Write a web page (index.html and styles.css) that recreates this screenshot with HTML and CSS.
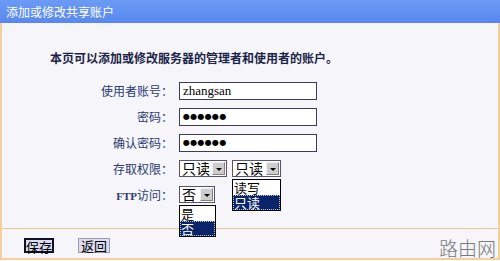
FILE: index.html
```html
<!DOCTYPE html>
<html lang="zh-CN">
<head>
<meta charset="utf-8">
<title>添加或修改共享账户</title>
<link rel="stylesheet" href="styles.css">
</head>
<body>
<div class="window">
  <div class="titlebar">添加或修改共享账户</div>
  <div class="content">
    <p class="intro">本页可以添加或修改服务器的管理者和使用者的账户。</p>
    <div class="form">
      <label class="lbl">使用者账号：</label>
      <div class="field"><div class="txt user">zhangsan</div></div>

      <label class="lbl">密码：</label>
      <div class="field"><div class="txt pw">●●●●●●</div></div>

      <label class="lbl">确认密码：</label>
      <div class="field"><div class="txt pw">●●●●●●</div></div>

      <label class="lbl">存取权限：</label>
      <div class="field selects">
        <div class="sel w48"><span class="val">只读</span><span class="arrow"></span></div>
        <div class="sel w49"><span class="val">只读</span><span class="arrow"></span>
          <ul class="dropdown dd49"><li>读写</li><li class="on">只读</li></ul>
        </div>
      </div>

      <label class="lbl"><span class="lat">FTP</span>访问：</label>
      <div class="field">
        <div class="sel w36"><span class="val">否</span><span class="arrow"></span>
          <ul class="dropdown dd37"><li>是</li><li class="on">否</li></ul>
        </div>
      </div>
    </div>
    <div class="sep"></div>
    <div class="footer">
      <div class="btns">
        <button class="btn default" type="button">保存</button>
        <button class="btn" type="button">返回</button>
      </div>
      <div class="mark">路由网</div>
    </div>
  </div>
</div>
</body>
</html>
```

FILE: styles.css
```css
* { box-sizing: border-box; }
body {
  margin: 0;
  width: 500px;
  height: 261px;
  overflow: hidden;
  background: #ffffff;
  font-family: "Noto Sans CJK SC", "Liberation Sans", sans-serif;
}
.window {
  height: 259px;
  display: flex;
  flex-direction: column;
}
.titlebar {
  height: 23px;
  line-height: 23px;
  padding-left: 6px;
  color: #ffffff;
  font-size: 12px;
  background: linear-gradient(#6b9bf5, #5887ef);
}
.content {
  flex: 1;
  display: flex;
  flex-direction: column;
  border: 2px solid #f2cf9c;
  border-top: 0;
  background: #f5f5fa;
}
.intro {
  margin: 27px 0 0 48px;
  font-size: 12px;
  line-height: 16px;
  font-weight: bold;
  color: #1b2448;
}
.form {
  margin-top: 16px;
  display: grid;
  grid-template-columns: 171px auto;
  grid-auto-rows: 18px;
  column-gap: 6px;
  row-gap: 8px;
}
.lbl {
  text-align: right;
  font-size: 12px;
  line-height: 18px;
  color: #2a3a70;
  white-space: nowrap;
}
.lat {
  font-family: "Liberation Serif", serif;
  font-weight: bold;
  font-size: 11px;
}
.txt {
  width: 138px;
  height: 18px;
  border: 1px solid #3c3c5a;
  background: #ffffff;
  padding: 0 3px;
  line-height: 16px;
  color: #000;
}
.user {
  font-family: "Liberation Serif", serif;
  font-size: 13px;
}
.pw {
  font-family: "DejaVu Sans", sans-serif;
  font-size: 8px;
  letter-spacing: 0.3px;
}
.selects {
  display: flex;
  gap: 5px;
}
.sel {
  position: relative;
  height: 17px;
  display: flex;
  align-items: stretch;
  border: 1px solid #55556a;
  background: #ffffff;
  font-size: 14px;
  color: #000;
}
.w48 { width: 48px; }
.w49 { width: 49px; }
.w36 { width: 36px; }
.val {
  flex: 1;
  padding-left: 2px;
  line-height: 15px;
  white-space: nowrap;
}
.arrow {
  position: relative;
  flex: none;
  width: 13px;
  margin: 1px 1px 1px 0;
  background: #cdcdcd;
  border: 1px solid;
  border-color: #eeeeee #808080 #808080 #eeeeee;
}
.arrow::after {
  content: "";
  position: absolute;
  left: 3px;
  top: 5px;
  border-left: 3px solid transparent;
  border-right: 3px solid transparent;
  border-top: 3px solid #000;
}
.dropdown {
  position: absolute;
  left: -1px;
  top: 18px;
  margin: 0;
  padding: 0;
  list-style: none;
  border: 1px solid #000;
  background: #ffffff;
  z-index: 2;
}
.dd49 { width: 49px; }
.dd37 { width: 37px; }
.dropdown li {
  height: 15px;
  line-height: 15px;
  padding-left: 1px;
  font-size: 13px;
}
.dropdown li.on {
  background: #0a246a;
  color: #ffffff;
  outline: 1px dotted #c8c8c8;
  outline-offset: -1px;
}
.sep {
  margin-top: 24px;
  height: 1px;
  background: #f0c890;
}
.footer {
  flex: 1;
  display: flex;
  justify-content: space-between;
  align-items: flex-start;
  padding: 9px 2px 0 22px;
}
.btns {
  display: flex;
  gap: 24px;
}
.btn {
  height: 15px;
  padding: 0;
  margin: 0;
  font-family: "Noto Sans CJK SC", sans-serif;
  font-size: 13px;
  line-height: 13px;
  white-space: nowrap;
  color: #000;
  background: #dcdcf2;
  border: 1px solid #9a9ab0;
}
.btn.default {
  border: 2px solid #111122;
  width: 30px;
}
.btn:not(.default) { width: 32px; }
.mark {
  font-size: 19px;
  line-height: 20px;
  color: #7a7a7a;
  font-weight: 300;
}
```
